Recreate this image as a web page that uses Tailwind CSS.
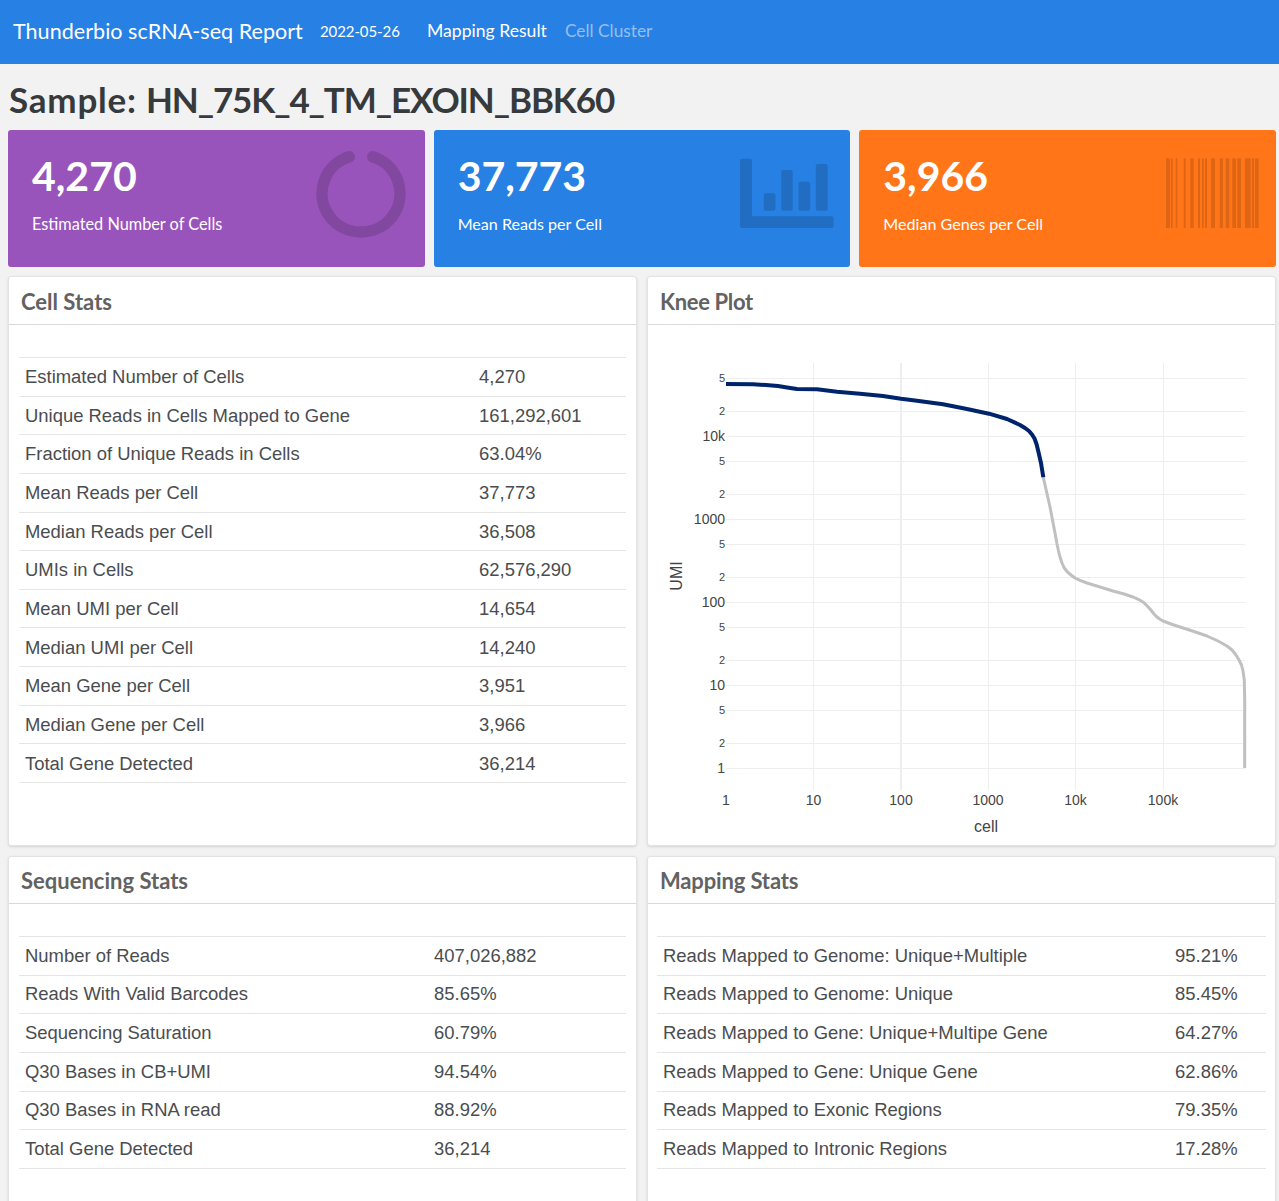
<!doctype html>
<html><head><meta charset="utf-8"><script src="https://cdn.jsdelivr.net/npm/@tailwindcss/browser@4"></script></head>
<body class="bg-[#f2f2f2] font-['Lato',sans-serif] text-[#373a3c] overflow-hidden h-[1201px]">
<nav class="h-16 bg-[#2780e3] flex items-center pl-[13px] pb-[2px] text-white">
  <span class="text-[21.6px] w-[307px]">Thunderbio scRNA-seq Report</span>
  <span class="text-[15px] w-[107px] tracking-[-0.1px]">2022-05-26</span>
  <span class="text-[17.6px] w-[138px]">Mapping Result</span>
  <span class="text-[17.3px] text-white/50">Cell Cluster</span>
</nav>
<main class="pl-2 pr-[3px]">
  <h1 class="text-[35px] font-bold leading-[44px] pt-[13px] pb-[9px] pl-px flex gap-[9px]"><span class="tracking-[0.8px]">Sample:</span><span class="tracking-[-1.1px]">HN_75K_4_TM_EXOIN_BBK60</span></h1>
  <section class="grid grid-cols-3 gap-[9px]">
    <div class="relative h-[137px] rounded-[3px] bg-[#9954bb] text-white pl-6 pt-5">
      <div class="text-[41px] font-bold leading-[52px]">4,270</div>
      <div class="text-[16.3px] mt-[10px]">Estimated Number of Cells</div>
      <svg class="absolute left-[308px] top-5" width="90" height="88" viewBox="316 150 90 88"><path d="M372.7 156.8A39 38.5 0 1 1 349.3 156.8" fill="none" stroke="#000" stroke-opacity=".15" stroke-width="11.5" stroke-linecap="round"/></svg>
    </div>
    <div class="relative h-[137px] rounded-[3px] bg-[#2780e3] text-white pl-6 pt-5">
      <div class="text-[41px] font-bold leading-[52px]">37,773</div>
      <div class="text-[16.1px] mt-[10px]">Mean Reads per Cell</div>
      <svg class="absolute left-[306px] top-[28px]" width="94" height="70" viewBox="740 158 94 70" fill="#000" fill-opacity=".15"><path d="M742 158.7h8a2 2 0 0 1 2 2V216.3h79.6a2 2 0 0 1 2 2V226a2 2 0 0 1-2 2H742a2 2 0 0 1-2-2V160.7a2 2 0 0 1 2-2z"/><rect x="763.8" y="193.3" width="11.6" height="17.4" rx="2"/><rect x="781.3" y="170" width="11.4" height="40.7" rx="2"/><rect x="798.4" y="181.7" width="11.8" height="29" rx="2"/><rect x="815.8" y="164" width="11.9" height="46.7" rx="2"/></svg>
    </div>
    <div class="relative h-[137px] rounded-[3px] bg-[#ff7518] text-white pl-6 pt-5">
      <div class="text-[41px] font-bold leading-[52px]">3,966</div>
      <div class="text-[16.1px] mt-[10px]">Median Genes per Cell</div>
      <svg class="absolute left-[307px] top-[28px]" width="94" height="70" viewBox="1166 158 94 70" fill="#000" fill-opacity=".13"><rect x="1166" y="158.3" width="4" height="69.7"/><rect x="1171" y="158.3" width="1.7" height="69.7"/><rect x="1175.7" y="158.3" width="1.6" height="69.7"/><rect x="1183.7" y="158.3" width="2" height="69.7"/><rect x="1190.3" y="158.3" width="3.4" height="69.7"/><rect x="1198" y="158.3" width="2" height="69.7"/><rect x="1202" y="158.3" width="1.7" height="69.7"/><rect x="1205" y="158.3" width="2" height="69.7"/><rect x="1211" y="158.3" width="4" height="69.7"/><rect x="1219.7" y="158.3" width="3.3" height="69.7"/><rect x="1225.7" y="158.3" width="3.6" height="69.7"/><rect x="1232.3" y="158.3" width="3.7" height="69.7"/><rect x="1237.3" y="158.3" width="3.7" height="69.7"/><rect x="1245" y="158.3" width="5.7" height="69.7"/><rect x="1252" y="158.3" width="2" height="69.7"/><rect x="1255" y="158.3" width="3.7" height="69.7"/></svg>
    </div>
  </section>
  <section class="grid grid-cols-2 gap-x-[10px] gap-y-[10px] mt-[9px]">
    <div class="h-[570px] bg-white border border-[#e3e3e3] rounded-[3px] shadow-sm">
      <h2 class="h-[48px] border-b border-[#d9d9d9] px-3 pt-[2px] flex items-center text-[22px] font-bold text-[#626262]">Cell Stats</h2>
      <div class="px-[10px] pt-8">
        <table class="w-full border-collapse font-['Liberation_Sans',sans-serif] text-[18.45px] leading-[25.65px] text-[#4a4d50] border-t border-[#e5e5e5]">
          <colgroup><col class="w-[454px]"><col></colgroup>
          <tbody class="[&_tr]:border-b [&_tr]:border-[#e5e5e5] [&_td]:px-[6px] [&_td]:pt-[6.2px] [&_td]:pb-[5.8px]">
            <tr><td>Estimated Number of Cells</td><td>4,270</td></tr>
            <tr><td>Unique Reads in Cells Mapped to Gene</td><td>161,292,601</td></tr>
            <tr><td>Fraction of Unique Reads in Cells</td><td>63.04%</td></tr>
            <tr><td>Mean Reads per Cell</td><td>37,773</td></tr>
            <tr><td>Median Reads per Cell</td><td>36,508</td></tr>
            <tr><td>UMIs in Cells</td><td>62,576,290</td></tr>
            <tr><td>Mean UMI per Cell</td><td>14,654</td></tr>
            <tr><td>Median UMI per Cell</td><td>14,240</td></tr>
            <tr><td>Mean Gene per Cell</td><td>3,951</td></tr>
            <tr><td>Median Gene per Cell</td><td>3,966</td></tr>
            <tr><td>Total Gene Detected</td><td>36,214</td></tr>
          </tbody>
        </table>
      </div>
    </div>
    <div class="h-[570px] bg-white border border-[#e3e3e3] rounded-[3px] shadow-sm">
      <h2 class="h-[48px] border-b border-[#d9d9d9] px-3 pt-[2px] flex items-center text-[22px] font-bold text-[#626262] tracking-[-0.35px]">Knee Plot</h2>
      <svg width="627" height="520" viewBox="648 325 627 520" class="block font-['Liberation_Sans',sans-serif]">
        <g stroke="#eeeeee" stroke-width="1" fill="none">
          <path d="M726 378.5H1245M726 411.5H1245M726 436.5H1245M726 461.5H1245M726 494.5H1245M726 519.5H1245M726 544.5H1245M726 577.5H1245M726 602.5H1245M726 627.5H1245M726 660.5H1245M726 685.5H1245M726 710.5H1245M726 743.5H1245M726 768.5H1245"/>
          <path d="M813.5 363V790M988.5 363V790M1075.5 363V790M1163.5 363V790"/>
          <path d="M901 363V790" stroke-width="2"/>
        </g>
        <polyline fill="none" stroke="#c0c0c0" stroke-width="3" stroke-linejoin="round" points="1043.3,477.3 1050,507 1055,533 1057,544 1058.5,551 1060,557 1062,563 1064,567.5 1067,571.5 1071,575 1075,578 1080,580.3 1087,583 1100,587 1113,591 1124,594 1133,597 1139,599.7 1143,602 1147,605.7 1150,609 1154,614 1157,617 1160,619.3 1163,621 1171,624 1180,627 1194,631.5 1207,636 1218,641 1227,646 1232,650 1236,655 1239,660 1241.5,665 1243,671 1244.3,680 1244.7,700 1244.7,733 1244.7,768"/>
        <polyline fill="none" stroke="#00246b" stroke-width="4" stroke-linejoin="round" points="726,384 753,384.3 766,385 778,386 787,387.5 797,389 817,389.3 837,391.7 860,393.7 883,396 901,398.7 917,400.7 943,404.3 967,409 989,413.7 1007,419 1020,425 1025,428 1029,431 1032,434.5 1034.5,438.5 1036.5,444 1038,450 1041,463 1043.3,477.3"/>
        <g fill="#444" font-size="14" text-anchor="end">
          <text x="725" y="441">10k</text><text x="725" y="524">1000</text><text x="725" y="607">100</text><text x="725" y="690">10</text><text x="725" y="773">1</text>
          <g font-size="11"><text x="725" y="382">5</text><text x="725" y="415">2</text><text x="725" y="465">5</text><text x="725" y="498">2</text><text x="725" y="548">5</text><text x="725" y="581">2</text><text x="725" y="631">5</text><text x="725" y="664">2</text><text x="725" y="714">5</text><text x="725" y="747">2</text></g>
        </g>
        <g fill="#444" font-size="14" text-anchor="middle">
          <text x="726" y="805">1</text><text x="813.5" y="805">10</text><text x="901" y="805">100</text><text x="988" y="805">1000</text><text x="1075.5" y="805">10k</text><text x="1163" y="805">100k</text>
          <text x="986" y="832" font-size="16">cell</text>
          <text transform="translate(682 576) rotate(-90)" font-size="16">UMI</text>
        </g>
      </svg>
    </div>
    <div class="h-[400px] bg-white border border-[#e3e3e3] rounded-[3px] shadow-sm">
      <h2 class="h-[47px] border-b border-[#d9d9d9] px-3 flex items-center text-[22px] font-bold text-[#626262]">Sequencing Stats</h2>
      <div class="px-[10px] pt-8">
        <table class="w-full border-collapse font-['Liberation_Sans',sans-serif] text-[18.45px] leading-[25.65px] text-[#4a4d50] border-t border-[#e5e5e5]">
          <colgroup><col class="w-[409px]"><col></colgroup>
          <tbody class="[&_tr]:border-b [&_tr]:border-[#e5e5e5] [&_td]:px-[6px] [&_td]:pt-[5.8px] [&_td]:pb-[6.2px]">
            <tr><td>Number of Reads</td><td>407,026,882</td></tr>
            <tr><td>Reads With Valid Barcodes</td><td>85.65%</td></tr>
            <tr><td>Sequencing Saturation</td><td>60.79%</td></tr>
            <tr><td>Q30 Bases in CB+UMI</td><td>94.54%</td></tr>
            <tr><td>Q30 Bases in RNA read</td><td>88.92%</td></tr>
            <tr><td>Total Gene Detected</td><td>36,214</td></tr>
          </tbody>
        </table>
      </div>
    </div>
    <div class="h-[400px] bg-white border border-[#e3e3e3] rounded-[3px] shadow-sm">
      <h2 class="h-[47px] border-b border-[#d9d9d9] px-3 flex items-center text-[22px] font-bold text-[#626262] tracking-[-0.15px]">Mapping Stats</h2>
      <div class="px-[9px] pt-8">
        <table class="w-full border-collapse font-['Liberation_Sans',sans-serif] text-[18.45px] leading-[25.65px] text-[#4a4d50] border-t border-[#e5e5e5]">
          <colgroup><col class="w-[512px]"><col></colgroup>
          <tbody class="[&_tr]:border-b [&_tr]:border-[#e5e5e5] [&_td]:px-[6px] [&_td]:pt-[5.8px] [&_td]:pb-[6.2px]">
            <tr><td>Reads Mapped to Genome: Unique+Multiple</td><td>95.21%</td></tr>
            <tr><td>Reads Mapped to Genome: Unique</td><td>85.45%</td></tr>
            <tr><td>Reads Mapped to Gene: Unique+Multipe Gene</td><td>64.27%</td></tr>
            <tr><td>Reads Mapped to Gene: Unique Gene</td><td>62.86%</td></tr>
            <tr><td>Reads Mapped to Exonic Regions</td><td>79.35%</td></tr>
            <tr><td>Reads Mapped to Intronic Regions</td><td>17.28%</td></tr>
          </tbody>
        </table>
      </div>
    </div>
  </section>
</main>
</body></html>
